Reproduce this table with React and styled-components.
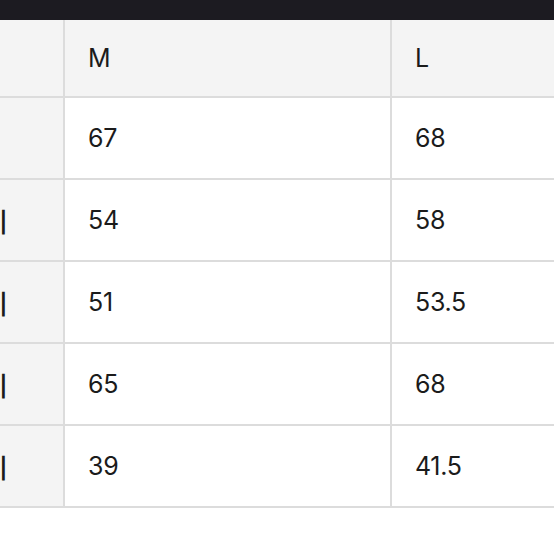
import React from "react";
import styled, { createGlobalStyle } from "styled-components";

const GlobalStyle = createGlobalStyle`
  html, body {
    margin: 0;
    padding: 0;
    background: #ffffff;
  }
  body {
    font-family: Inter, "Noto Sans CJK KR", sans-serif;
    color: #1b1b1b;
  }
`;

const Page = styled.div`
  width: 554px;
  height: 554px;
  overflow: hidden;
  background: #fff;
`;

const TopBar = styled.div`
  height: 20px;
  background: #1c1b21;
`;

const Table = styled.div`
  display: grid;
  grid-template-columns: 63px 325px 1fr;
  grid-template-rows: 76px repeat(5, 80px);
  gap: 2px;
  padding-bottom: 2px;
  background: #dcdcdc;
`;

const Cell = styled.div`
  display: flex;
  align-items: center;
  padding-left: 23px;
  background: ${(p) => (p.$shaded ? "#f4f4f4" : "#ffffff")};
  font-size: 25px;
  font-weight: 400;
  letter-spacing: -0.3px;
`;

// first column is scrolled off to the left, only the label ends peek in
const LabelCell = styled.div`
  display: flex;
  align-items: center;
  justify-content: flex-end;
  padding-right: 55px;
  overflow: hidden;
  white-space: nowrap;
  background: #f4f4f4;
  font-family: "Noto Sans CJK KR", sans-serif;
  font-size: 26px;
  font-weight: 500;
`;

const rows = [
  { label: "", m: "67", l: "68" },
  { label: "어깨너비", m: "54", l: "58" },
  { label: "가슴너비", m: "51", l: "53.5" },
  { label: "소매길이", m: "65", l: "68" },
  { label: "밑단너비", m: "39", l: "41.5" },
];

export default function App() {
  return (
    <Page>
      <GlobalStyle />
      <TopBar />
      <Table>
        <LabelCell />
        <Cell $shaded>M</Cell>
        <Cell $shaded>L</Cell>
        {rows.map((r, i) => (
          <React.Fragment key={i}>
            <LabelCell>{r.label}</LabelCell>
            <Cell>{r.m}</Cell>
            <Cell>{r.l}</Cell>
          </React.Fragment>
        ))}
      </Table>
    </Page>
  );
}
